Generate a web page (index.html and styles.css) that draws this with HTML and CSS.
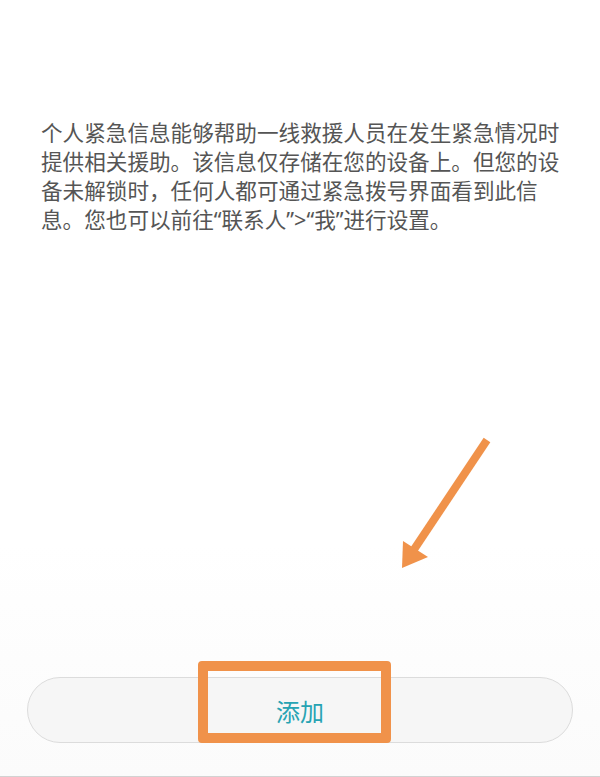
FILE: index.html
```html
<!DOCTYPE html>
<html lang="zh-CN">
<head>
<meta charset="utf-8">
<title>个人紧急信息</title>
<link rel="stylesheet" href="styles.css">
</head>
<body>
<div class="page">
  <p class="intro">个人紧急信息能够帮助一线救援人员在发生紧急情况时提供相关援助。该信息仅存储在您的设备上。但您的设备未解锁时，任何人都可通过紧急拨号界面看到此信<br>息。您也可以前往“联系人”&gt;“我”进行设置。</p>
  <div class="footer">
    <button class="add-btn">添加</button>
  </div>
  <div class="highlight"></div>
  <svg class="arrow" width="600" height="777" viewBox="0 0 600 777">
    <line x1="487" y1="440" x2="413" y2="551" stroke="#f0924a" stroke-width="8"/>
    <polygon points="402,568 403,541 428,557" fill="#f0924a"/>
  </svg>
</div>
</body>
</html>
```
FILE: styles.css
```css
html, body {
  margin: 0;
  padding: 0;
  background: #ffffff;
}
.page {
  position: relative;
  width: 600px;
  height: 777px;
  box-sizing: border-box;
  display: flex;
  flex-direction: column;
  justify-content: space-between;
  background: linear-gradient(#ffffff 0%, #ffffff 70%, #fbfbfb 100%);
  border-bottom: 1px solid #d2d2d2;
  overflow: hidden;
}
.intro {
  margin: 0;
  width: 520px;
  padding: 118px 0 0 41px;
  font-family: "Noto Sans", "Noto Sans CJK SC", sans-serif;
  font-size: 21.6px;
  line-height: 29px;
  color: #555555;
}
.footer {
  padding: 0 27px 33px 27px;
}
.add-btn {
  display: block;
  width: 100%;
  height: 66px;
  border: 1px solid #dcdcdc;
  border-radius: 33px;
  background: #f6f6f6;
  color: #27a3b3;
  font-family: "Noto Sans CJK SC", "Noto Sans", sans-serif;
  font-size: 24px;
  padding: 0;
}
.highlight {
  position: absolute;
  left: 198px;
  top: 661px;
  width: 193px;
  height: 82px;
  box-sizing: border-box;
  border: 10px solid #f0924a;
  border-radius: 4px;
}
.arrow {
  position: absolute;
  left: 0;
  top: 0;
}
```
